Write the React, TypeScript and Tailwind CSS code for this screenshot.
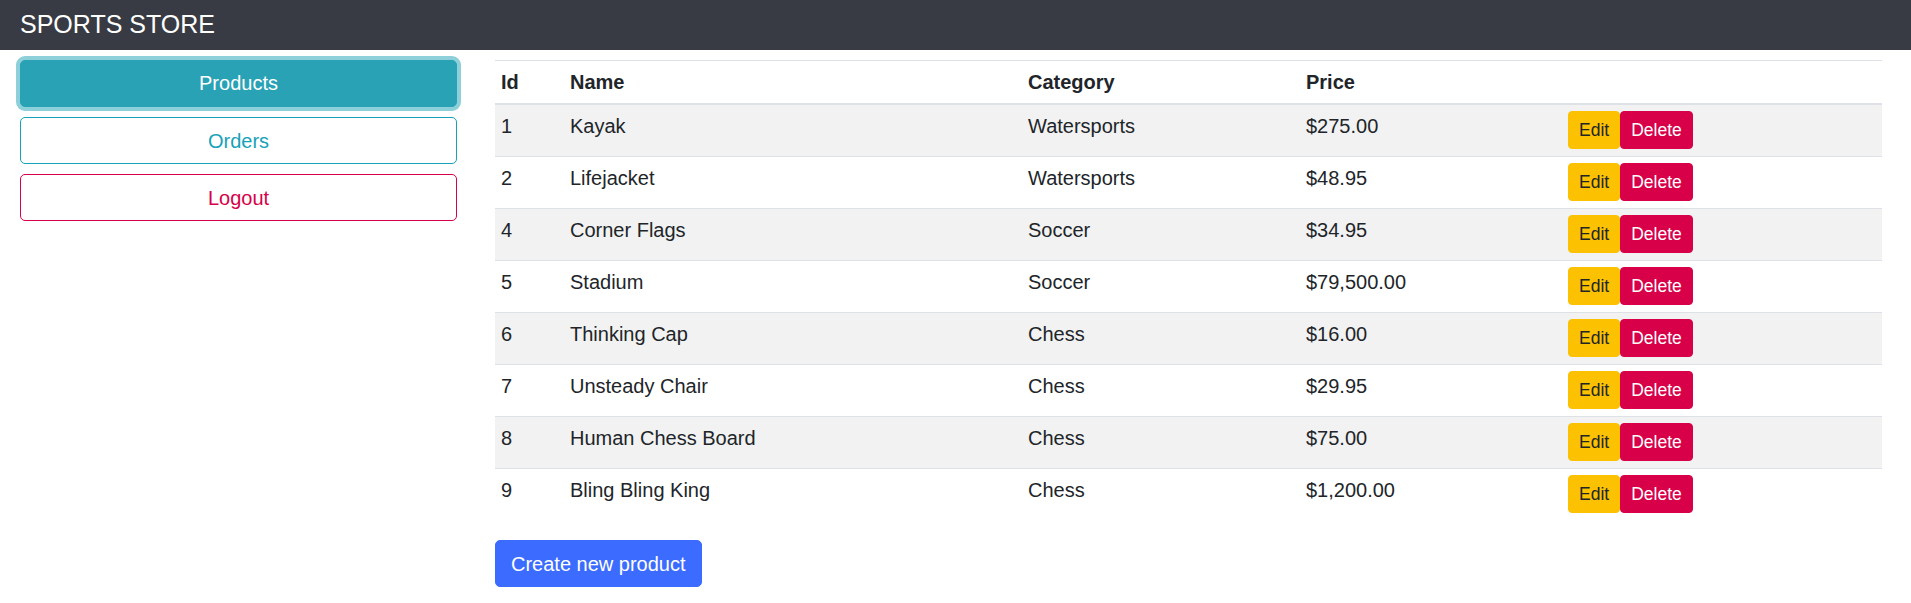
const products = [
  { id: 1, name: 'Kayak', category: 'Watersports', price: '$275.00' },
  { id: 2, name: 'Lifejacket', category: 'Watersports', price: '$48.95' },
  { id: 4, name: 'Corner Flags', category: 'Soccer', price: '$34.95' },
  { id: 5, name: 'Stadium', category: 'Soccer', price: '$79,500.00' },
  { id: 6, name: 'Thinking Cap', category: 'Chess', price: '$16.00' },
  { id: 7, name: 'Unsteady Chair', category: 'Chess', price: '$29.95' },
  { id: 8, name: 'Human Chess Board', category: 'Chess', price: '$75.00' },
  { id: 9, name: 'Bling Bling King', category: 'Chess', price: '$1,200.00' },
];

export default function App() {
  return (
    <div className="min-h-screen bg-white font-['Liberation_Sans',Arial,sans-serif] text-[#212529]">
      {/* Navbar */}
      <div className="h-[50px] bg-[#383b43] px-5 flex items-center">
        <span className="text-[25px] leading-[37.5px] text-white">SPORTS STORE</span>
      </div>

      <div className="flex">
        {/* Sidebar */}
        <div className="w-[478px] shrink-0 pl-5 pr-[21px] pt-[10px] flex flex-col gap-[10px]">
          <button className="h-[47px] w-full rounded-[5px] border border-[#29a2b6] bg-[#29a2b6] text-white text-[20px] leading-[30px] pb-[2px] ring-4 ring-[#8dd0da]">
            Products
          </button>
          <button className="h-[47px] w-full rounded-[5px] border border-[#17a2b8] bg-white text-[#17a2b8] text-[20px] leading-[30px]">
            Orders
          </button>
          <button className="h-[47px] w-full rounded-[5px] border border-[#d70049] bg-white text-[#d70049] text-[20px] leading-[30px]">
            Logout
          </button>
        </div>

        {/* Main */}
        <div className="pl-[17px] pt-[10px]">
          <table className="w-[1387px] table-fixed border-collapse text-[20px] leading-[30px]">
            <colgroup>
              <col className="w-[69px]" />
              <col className="w-[458px]" />
              <col className="w-[278px]" />
              <col className="w-[262px]" />
              <col className="w-[320px]" />
            </colgroup>
            <thead>
              <tr>
                <th className="border-t border-b-2 border-[#dee2e6] p-[6px] text-left font-bold">Id</th>
                <th className="border-t border-b-2 border-[#dee2e6] p-[6px] text-left font-bold">Name</th>
                <th className="border-t border-b-2 border-[#dee2e6] p-[6px] text-left font-bold">Category</th>
                <th className="border-t border-b-2 border-[#dee2e6] p-[6px] text-left font-bold">Price</th>
                <th className="border-t border-b-2 border-[#dee2e6] p-[6px]"></th>
              </tr>
            </thead>
            <tbody>
              {products.map((p, i) => (
                <tr key={p.id} className={i % 2 === 0 ? 'bg-[#f2f2f2]' : 'bg-white'}>
                  <td className="border-t border-[#dee2e6] px-[6px] pt-[6px] pb-[7px] align-top">{p.id}</td>
                  <td className="border-t border-[#dee2e6] px-[6px] pt-[6px] pb-[7px] align-top">{p.name}</td>
                  <td className="border-t border-[#dee2e6] px-[6px] pt-[6px] pb-[7px] align-top">{p.category}</td>
                  <td className="border-t border-[#dee2e6] px-[6px] pt-[6px] pb-[7px] align-top">{p.price}</td>
                  <td className="border-t border-[#dee2e6] px-[6px] pt-[6px] pb-[7px] align-top">
                    <div className="flex">
                      <button className="h-[38px] px-[10px] rounded-[4px] border border-[#fcc100] bg-[#fcc100] text-[#212529] text-[17.5px] leading-[26px]">
                        Edit
                      </button>
                      <button className="h-[38px] px-[10px] rounded-[4px] border border-[#d70049] bg-[#d70049] text-white text-[17.5px] leading-[26px]">
                        Delete
                      </button>
                    </div>
                  </td>
                </tr>
              ))}
            </tbody>
          </table>

          <button className="mt-5 h-[47px] px-[15px] rounded-[5px] border border-[#3b6cff] bg-[#3b6cff] text-white text-[20px] leading-[30px]">
            Create new product
          </button>
        </div>
      </div>
    </div>
  );
}
